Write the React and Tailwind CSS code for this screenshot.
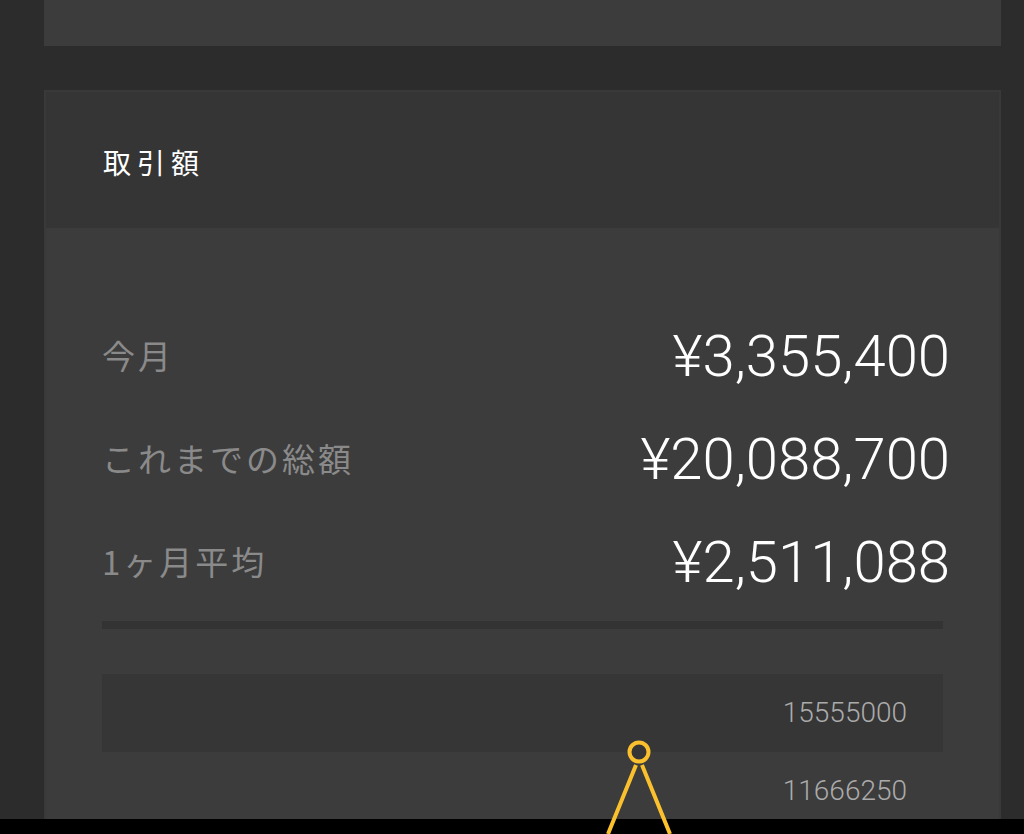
import React from "react";

const jp = { fontFamily: '"Noto Sans CJK JP", "Noto Sans", sans-serif' };
const num = { fontFamily: 'Roboto, "Liberation Sans", sans-serif' };

const stats = [
  { label: "今月", value: "¥3,355,400" },
  { label: "これまでの総額", value: "¥20,088,700" },
  { label: "1ヶ月平均", value: "¥2,511,088" },
];

export default function App() {
  return (
    <div className="h-[834px] w-[1024px] bg-[#2c2c2c] flex flex-col overflow-hidden">
      <div className="flex-1 flex flex-col pl-[44px] pr-[23px] gap-[44px] min-h-0">
        <div className="h-[46px] shrink-0 bg-[#3c3c3c]" />
        <div className="flex-1 flex flex-col border-2 border-b-0 border-[#393939] min-h-0">
          <div className="h-[136px] shrink-0 bg-[#353535] flex items-center pl-[57px] pt-[4px]">
            <span className="text-white text-[28px] tracking-[6px] leading-none" style={jp}>
              取引額
            </span>
          </div>
          <div className="flex-1 bg-[#3c3c3c] pl-[56px] pr-[56px] pt-[76px] min-h-0">
            {stats.map((s) => (
              <div key={s.label} className="h-[103px] flex items-center justify-between">
                <span className="text-[33px] text-[#8a8a8a] tracking-[3px] leading-none" style={jp}>
                  {s.label}
                </span>
                <span className="text-[58px] font-light text-white -mr-[7px] leading-none" style={num}>
                  {s.value}
                </span>
              </div>
            ))}
            <div className="mt-[8px] h-[8px] bg-[#333333]" />
            <div className="relative mt-[45px]">
              <div className="h-[78px] bg-[#363636] flex items-center justify-end pr-[36px]">
                <span className="text-[28px] font-light text-[#ababab] leading-none" style={num}>
                  15555000
                </span>
              </div>
              <div className="h-[78px] flex items-center justify-end pr-[36px]">
                <span className="text-[28px] font-light text-[#ababab] leading-none" style={num}>
                  11666250
                </span>
              </div>
              <svg
                className="absolute left-0 top-0"
                width="842"
                height="160"
                viewBox="0 0 842 160"
                fill="none"
              >
                <path d="M534 91 L506 160 M540 91 L568 160" stroke="#fbc02d" strokeWidth="4" />
                <circle cx="537" cy="78" r="9.5" stroke="#fbc02d" strokeWidth="4" fill="#363636" />
              </svg>
            </div>
          </div>
        </div>
      </div>
      <div className="h-[15px] shrink-0 bg-black" />
    </div>
  );
}
